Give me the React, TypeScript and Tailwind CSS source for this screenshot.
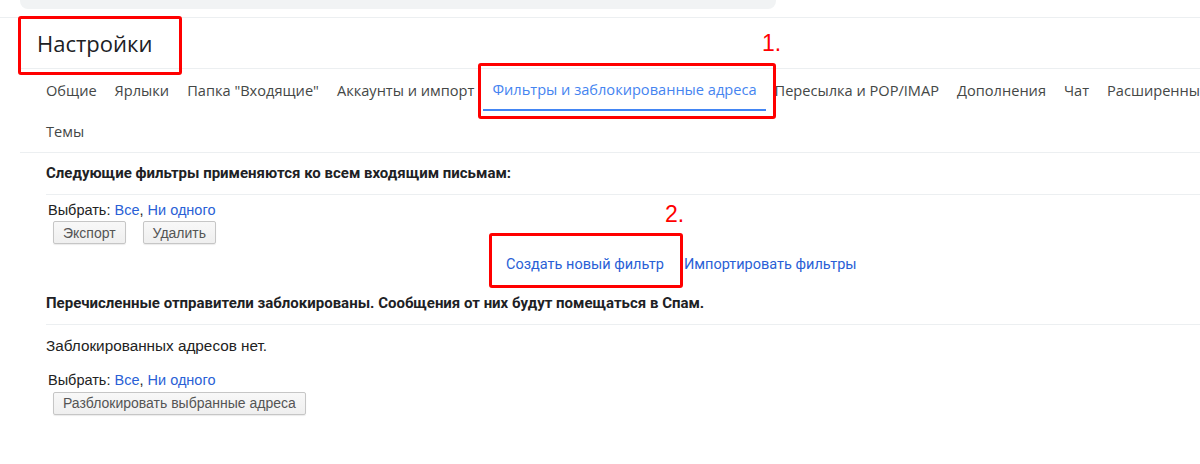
import React from 'react'

const TABS = [
  'Общие',
  'Ярлыки',
  'Папка "Входящие"',
  'Аккаунты и импорт',
  'Фильтры и заблокированные адреса',
  'Пересылка и POP/IMAP',
  'Дополнения',
  'Чат',
  'Расширенные',
]

const ACTIVE = 'Фильтры и заблокированные адреса'

function OldButton({ children }: { children: React.ReactNode }) {
  return (
    <button
      type="button"
      className="h-[23px] rounded-[2px] border border-[#c6c6c6] bg-gradient-to-b from-[#f8f8f8] to-[#efefef] px-[9px] text-[14px] leading-none text-[#555] shadow-[0_1px_1px_rgba(0,0,0,0.08)]"
    >
      {children}
    </button>
  )
}

function SelectLine() {
  return (
    <div className="pl-[2px] text-[14.5px] leading-[18px] text-[#222]">
      Выбрать: <a className="text-[#2a5fd6]">Все</a>, <a className="text-[#2a5fd6]">Ни одного</a>
    </div>
  )
}

export default function App() {
  return (
    <div className="relative h-[464px] w-[1200px] overflow-hidden bg-white font-['Liberation_Sans',Arial,sans-serif]">
      {/* search bar stub */}
      <div className="ml-[20px] h-[9px] w-[756px] rounded-b-[8px] bg-[#f1f3f4]" />

      <div className="mt-[8px] border-t border-[#eceff1]">
        {/* Title */}
        <div className="ml-[20px] flex h-[51px] items-center border-b border-[#eceff1] pl-[17px]">
          <h1 className="font-['Open_Sans',sans-serif] text-[22px] font-normal text-[#202124]">Настройки</h1>
        </div>

        {/* Tabs */}
        <div className="ml-[20px] border-b border-[#eceff1] pl-[17px] font-['Open_Sans',sans-serif] text-[14.6px]">
          <div className="flex h-[42px] overflow-hidden whitespace-nowrap">
            {TABS.map((t) => (
              <div
                key={t}
                className={
                  t === ACTIVE
                    ? 'flex shrink-0 items-center border-b-2 border-[#4285f4] px-[9px] pt-[1px] text-[#4584f0]'
                    : 'flex shrink-0 items-center px-[9px] pt-[1px] text-[#444746]'
                }
              >
                {t}
              </div>
            ))}
          </div>
          <div className="flex h-[41px] items-center px-[9px] text-[#444746]">Темы</div>
        </div>

        {/* Filters */}
        <div className="pl-[46px]">
          <div className="flex h-[42px] items-center border-b border-[#eceff1] font-['Roboto',sans-serif] text-[15px] font-bold text-[#202124]">
            Следующие фильтры применяются ко всем входящим письмам:
          </div>
          <div className="pt-[6px]">
            <SelectLine />
            <div className="mt-[2px] flex gap-[17px] pl-[7px]">
              <OldButton>Экспорт</OldButton>
              <OldButton>Удалить</OldButton>
            </div>
          </div>
          <div className="mt-[11px] flex h-[20px] items-center pl-[460px] font-['Roboto',sans-serif] text-[14.5px] text-[#2a5fd6]">
            <a>Создать новый фильтр</a>
            <a className="ml-[20px]">Импортировать фильтры</a>
          </div>

          <div className="mt-[8px] flex h-[42px] items-center border-b border-[#eceff1] font-['Roboto',sans-serif] text-[15px] font-bold text-[#202124]">
            Перечисленные отправители заблокированы. Сообщения от них будут помещаться в Спам.
          </div>
          <div className="flex h-[42px] items-center text-[15.3px] text-[#222]">Заблокированных адресов нет.</div>
          <div className="mt-[4px]">
            <SelectLine />
            <div className="mt-[2px] pl-[7px]">
              <OldButton>Разблокировать выбранные адреса</OldButton>
            </div>
          </div>
        </div>
      </div>

      {/* Annotations */}
      <div className="absolute left-[18px] top-[16px] h-[59px] w-[164px] rounded-[3px] border-[3px] border-[#ff0000]" />
      <div className="absolute left-[478px] top-[63px] h-[56px] w-[298px] rounded-[3px] border-[3px] border-[#ff0000]" />
      <div className="absolute left-[489px] top-[233px] h-[55px] w-[194px] rounded-[3px] border-[3px] border-[#ff0000]" />
      <div className="absolute left-[762px] top-[32px] text-[23px] leading-none text-[#ff0000]">1.</div>
      <div className="absolute left-[665px] top-[203px] text-[23px] leading-none text-[#ff0000]">2.</div>
    </div>
  )
}
